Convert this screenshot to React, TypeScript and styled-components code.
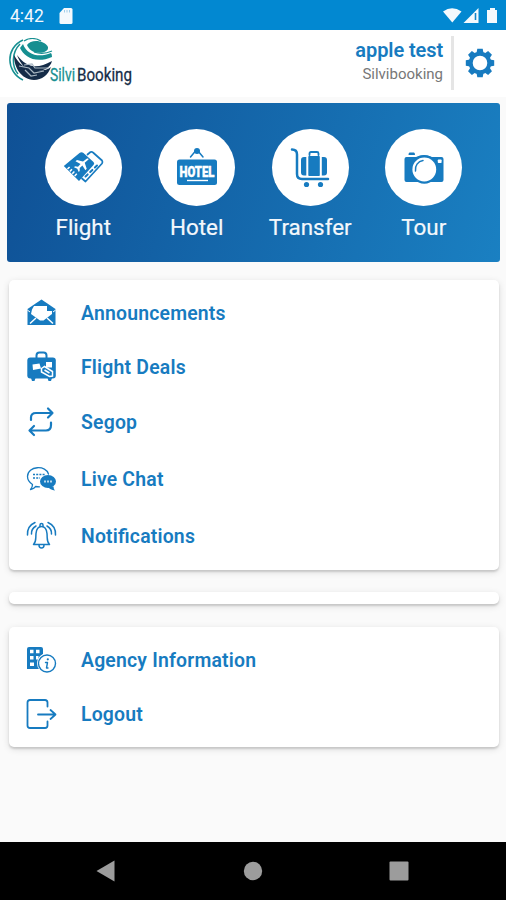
import React from 'react';
import styled, { createGlobalStyle } from 'styled-components';

const blue = '#177bc0';

const GlobalStyle = createGlobalStyle`
  * { box-sizing: border-box; }
  body { margin: 0; background: #fafafa; font-family: Roboto, "Liberation Sans", sans-serif; }
`;

const Screen = styled.div`
  display: flex;
  flex-direction: column;
  width: 506px;
  height: 900px;
  overflow: hidden;
  background: #fafafa;
`;

const StatusBar = styled.div`
  display: flex;
  align-items: center;
  height: 30px;
  padding: 2px 8px 0 10px;
  background: #0288d1;
  color: #f2f8fd;
`;

const Clock = styled.span`
  width: 49px;
  font-size: 17.5px;
  white-space: nowrap;
`;

const StatusIcons = styled.div`
  display: flex;
  align-items: center;
  margin-left: auto;
`;

const Header = styled.header`
  display: flex;
  height: 67px;
  background: #fff;
`;

const Brand = styled.div`
  display: flex;
  padding: 8px 0 0 9px;
`;

const BrandName = styled.svg`
  margin: 24px 0 0 -4px;
  overflow: visible;
`;

const User = styled.div`
  display: flex;
  flex-direction: column;
  align-items: flex-end;
  margin-left: auto;
  padding: 8px 8px 0 0;
`;

const UserName = styled.span`
  font-size: 20px;
  line-height: 24px;
  font-weight: 600;
  letter-spacing: -0.1px;
  color: ${blue};
`;

const Agency = styled.span`
  font-size: 15px;
  line-height: 24px;
  color: #777;
`;

const Divider = styled.div`
  width: 3px;
  height: 54px;
  margin-top: 6px;
  background: #e5e5e5;
`;

const Settings = styled.button`
  width: 52px;
  height: 66px;
  padding: 0;
  border: 0;
  background: none;
  line-height: 0;
`;

const Banner = styled.nav`
  display: grid;
  grid-template-columns: repeat(4, 113.5px);
  justify-content: center;
  height: 159px;
  margin: 6px 6px 0 7px;
  padding: 26px 0 0;
  border-radius: 3px;
  background: linear-gradient(107deg, #0f5095 0%, #1a80c2 100%);
`;

const Service = styled.div`
  display: flex;
  flex-direction: column;
  align-items: center;
`;

const Disc = styled.div`
  display: grid;
  place-items: center;
  width: 77px;
  height: 77px;
  border-radius: 50%;
  background: #fff;
`;

const ServiceLabel = styled.span`
  margin-top: 7px;
  font-size: 22.4px;
  line-height: 28px;
  -webkit-text-stroke: 0.2px #f4f8fc;
  color: #f4f8fc;
`;

const Card = styled.section<{ $height: number; $gap: number }>`
  height: ${(p) => p.$height}px;
  margin: ${(p) => p.$gap}px 7px 0 9px;
  padding-top: 6px;
  border-radius: 5px;
  background: #fff;
  box-shadow: 0 2px 2px rgba(0, 0, 0, 0.13), 0 2px 7px rgba(0, 0, 0, 0.13);
`;

const Row = styled.div<{ $height: number }>`
  display: grid;
  grid-template-columns: 72px 1fr;
  align-items: center;
  height: ${(p) => p.$height}px;
`;

const RowIcon = styled.svg`
  margin-left: 16px;
  overflow: visible;
`;

const RowLabel = styled.span`
  padding-top: 1px;
  font-size: 19.4px;
  font-weight: 600;
  letter-spacing: 0.2px;
  font-feature-settings: "liga" 1;
  color: ${blue};
`;

const SystemNav = styled.footer`
  display: flex;
  justify-content: space-between;
  align-items: center;
  height: 58px;
  margin-top: auto;
  padding: 0 97px 0 96px;
  background: #000;
`;

const line = { fill: 'none', stroke: blue, strokeLinecap: 'round', strokeLinejoin: 'round' } as const;

const icons = {
  mail: (
    <>
      <path d="M.5 12V11L14.500 1.500 28.500 11v16H.5z" fill={blue} />
      <path d="m5 11.500 2-3.500h13v5h5v3L16.500 22.500h-3.500L4 16z" fill="#fff" />
      <path d="M21 8.500v3.500h4" {...line} strokeWidth="1.500" />
      <path d="m3 25.500 6-5.500m17 5.500-6-5.500" fill="none" stroke="#fff" strokeWidth="1.500" />
      <path d="M.3 12 3 14M28.700 12 26 14" fill="none" stroke="#fff" strokeWidth="1" />
    </>
  ),
  suitcase: (
    <>
      <path d="M9.500 7V3.500q0-3 3-3h4q3 0 3 3V7" {...line} strokeWidth="2" />
      <rect x=".3" y="5.500" width="28.500" height="21" rx="3" fill={blue} />
      <path d="M4 26h4.500l-1 3H5zM20.500 26H25l-1 3h-2.500z" fill={blue} />
      <path d="m5.500 12.500 7-1 1.500 5-8 1.500zM19 10h6v5.500h-6z" fill="#fff" />
      <path d="m14.500 16.500 3-2 8 5v4.500l-3 .5-8-4.500z" fill={blue} stroke="#fff" strokeWidth="1.500" />
      <path d="m17.500 18 5 3" stroke="#fff" strokeWidth="1.500" />
    </>
  ),
  repeat: (
    <path d="M4 13v-2.500Q4 6 9 6h16.500M21 1.500 25.500 6 21 10.500M24 15.500V18q0 5.500-5 5.500H3M7 19 2.500 23.500 7 28" {...line} strokeWidth="2.200" />
  ),
  chat: (
    <>
      <path d="M21.500 10C19.500 1 .5 1.500.5 12.500c0 4 2 6 5 8q0 3-2 5 4-1 5-3l4 .3" {...line} strokeWidth="1.300" />
      <path d="M6 10.500h12M6 14h7" fill="none" stroke={blue} strokeWidth="1.700" strokeDasharray="2 1.200" />
      <ellipse cx="21" cy="17.500" rx="8" ry="6.500" fill={blue} />
      <path d="M20.500 22.500h6q0 2.500 1.500 4-5-.5-7.500-4z" fill={blue} />
      <path d="M17 17.500h8" stroke="#b9d8ec" strokeWidth="1.800" strokeDasharray="2 1" />
    </>
  ),
  bell: (
    <>
      <path d="M6.500 23.500c3-3 2-5 2.500-11C9.500 7.500 11.500 5.500 14.500 5.500s5 2 5.500 7c.5 6-.5 8 2.500 11zM13 5.500V4a1.500 1.500 0 0 1 3 0v1.500M12 24q0 3 2.500 3t2.500-3" {...line} strokeWidth="1.500" />
      <path d="M8 1.500Q0 5 .5 14M9 5Q4 8 4.500 13M21 1.500Q29 5 28.500 14M20 5Q25 8 24.500 13" {...line} strokeWidth="1.500" />
    </>
  ),
  agency: (
    <>
      <path d="M0 4Q0 2 2 2h12q2 0 2 2v5q-6 3-5 10l2 5H0z" fill={blue} />
      <path d="M3 4.800h3.500v3.500H3zm6 0h3.500v3.500H9zM3 11h3.500v3.500H3zm6 0h2.500v3.500H9zM3 17.500h4v3.500H3z" fill="#fff" />
      <circle cx="20" cy="18.500" r="10" fill="#fff" />
      <circle cx="20" cy="18.500" r="8.500" {...line} strokeWidth="1.400" />
      <path d="M18.500 17.500h2l-1 5.500h1.500" {...line} strokeWidth="1.400" />
      <circle cx="20.800" cy="14.300" r="1.100" fill={blue} />
    </>
  ),
  logout: (
    <path d="M20.500 7.500V3.500q0-2.500-2.500-2.500H3Q.5 1 .5 3.500v23Q.5 29 3 29h15q2.500 0 2.500-2.500v-4M11 15.500h17M23.500 11 28.500 15.500l-5 4.500" {...line} strokeWidth="1.800" />
  ),
};

type IconName = keyof typeof icons;

const primary: { icon: IconName; label: string; height: number }[] = [
  { icon: 'mail', label: 'Announcements', height: 54 },
  { icon: 'suitcase', label: 'Flight Deals', height: 54 },
  { icon: 'repeat', label: 'Segop', height: 56 },
  { icon: 'chat', label: 'Live Chat', height: 57 },
  { icon: 'bell', label: 'Notifications', height: 57 },
];

const secondary: typeof primary = [
  { icon: 'agency', label: 'Agency Information', height: 54 },
  { icon: 'logout', label: 'Logout', height: 54 },
];

const MenuRow = ({ icon, label, height }: (typeof primary)[number]) => (
  <Row $height={height}>
    <RowIcon width="34" height="30" viewBox="-2 0 34 30">{icons[icon]}</RowIcon>
    <RowLabel>{label}</RowLabel>
  </Row>
);

const services = [
  {
    label: 'Flight',
    art: (
      <>
        <path d="m24.500 6.500 3-2.500q1.500-.5 2.500.5l9 8q1 1.500 0 3L22.500 33.500 19 30.500" {...line} strokeWidth="1.700" />
        <path d="m22.500 28.500 11.500-11" {...line} strokeWidth="2" strokeDasharray="3 3.500" />
        <path d="M.8 18 16.500 5q2-1.500 4 0l10 9q1.500 1.500 0 3L16 33z" fill={blue} />
        <path d="m5 19.500 9.500 9" stroke="#fff" strokeWidth="3" strokeDasharray="1.500 1.800" />
        <path d="m24 10.500-4 3-6-1.500-1.500 1.200 5 2.800-2.500 2.700-3-.4-1 1 3.300 1.400 1.400 3.300 1-1v-3l2.700-2.500 3 4.700 1.300-1.400-2-6 3.800-3.300q.5-1.500-1.500-1z" fill="#fff" />
      </>
    ),
  },
  {
    label: 'Hotel',
    art: (
      <>
        <path d="m13.500 9 5-6h2.500l5 6" {...line} strokeWidth="1.500" />
        <circle cx="20" cy="3" r="3" fill={blue} />
        <rect x="0" y="11.500" width="40" height="25.500" rx="2.500" fill={blue} />
        <text x="20" y="29" textAnchor="middle" textLength="35" lengthAdjust="spacingAndGlyphs" fontFamily="Roboto, sans-serif" fontWeight="900" fontSize="15.5" fill="#fff" stroke="#fff" strokeWidth=".4">HOTEL</text>
        <path d="M10 32.500h21" stroke="#fff" strokeWidth="1.400" />
      </>
    ),
  },
  {
    label: 'Transfer',
    art: (
      <>
        <path d="M2 1.500q5 0 5 5V26q0 5 5 5h26" {...line} strokeWidth="2.500" />
        <path d="M19.500 7V5.500q0-1.500 1.500-1.500h6q1.500 0 1.500 1.500V7" {...line} strokeWidth="1.800" />
        <rect x="18.300" y="8" width="11.500" height="20" rx=".8" fill={blue} />
        <path d="M16.300 9v18.500H14q-3 0-3-3V12q0-3 3-3zM31.800 9v18.500H34q3 0 3-3V12q0-3-3-3z" fill={blue} />
        <circle cx="16.500" cy="36.500" r="2.600" fill={blue} />
        <circle cx="30.500" cy="36.500" r="2.600" fill={blue} />
      </>
    ),
  },
  {
    label: 'Tour',
    art: (
      <>
        <path d="M5.500 4.500h4.500q1 0 1 2.500H4.500q0-2.500 1-2.500zM2.500 9H12q8-4 16 0h9.500q2 0 2 2v21q0 2-2 2h-35q-2 0-2-2V11q0-2 2-2z" fill={blue} />
        <circle cx="20.300" cy="21.500" r="14.200" fill={blue} />
        <circle cx="20.300" cy="21.500" r="11.900" fill="#fff" />
        <path d="M11.500 23a9 9 0 0 1 7.500-10.500" {...line} strokeWidth="1.500" />
        <rect x="33.800" y="11.500" width="3.800" height="3.500" rx=".7" fill="#fff" />
      </>
    ),
  },
];

const SdCard = () => (
  <svg width="14" height="16" viewBox="0 0 14 16">
    <path d="M5 0h7q1.500 0 1.500 1.500v13q0 1.500-1.500 1.500H2Q.5 16 .5 14.500V5z" fill="#f4f9fd" />
    <path d="M5.500 2v2.500M8 2v2.500M10.500 2v2.500" stroke="#9fcdea" strokeWidth="1" />
  </svg>
);

const Globe = () => (
  <svg width="46" height="46" viewBox="0 0 46 46">
    <path d="M14 2C-4 10-3 34 14 42M11 6C2 15 3 29 9 36" fill="none" stroke="#168f91" strokeWidth="1.500" />
    <path d="M5 17c0 13 7 24 20 25 8 0 14-5 17-13-5 4-11 4-17 3-9-1-15-6-20-15z" fill="#152c48" />
    <path d="M8 17c9 12 19 15 35 6-2 8-11 11-19 10-8-1-13-8-16-16z" fill="#152c48" />
    <path d="M11 10c4 9 16 16 32 9q0-3-1-4c-12 5-24 2-28-9z" fill="#168f91" />
    <path d="M18 7c4-6 17-5 21 2 1 5-8 7-14 5q-5-2-7-7z" fill="#168f91" />
    <path d="M15 3q8-5 17 0M43 13q-9 4-18 1" fill="none" stroke="#168f91" strokeWidth="1.200" />
    <path d="m10 28 10 2 5 5 10-2M16 32l6 6 6-1M15 27l8-1 3 4 14 0" fill="none" stroke="#a9b7c2" strokeWidth="1.200" />
  </svg>
);

const teeth = [0, 45, 90, 135, 180, 225, 270, 315];

export default function App() {
  return (
    <Screen>
      <GlobalStyle />
      <StatusBar>
        <Clock>4:42</Clock>
        <SdCard />
        <StatusIcons>
          <svg width="55" height="18" viewBox="0 0 55 18" fill="#f4f9fd">
            <path d="M0 4.500q9-6.500 18.500 0L9.300 15.500z" />
            <path d="M20.500 16 35.500 1v15z" />
            <path d="M32.500 6v7" stroke="#1185ca" strokeWidth="1.600" />
            <path d="M44 3h3V1h5v2h2v13H44z" />
          </svg>
        </StatusIcons>
      </StatusBar>
      <Header>
        <Brand>
          <Globe />
          <BrandName width="82" height="26" viewBox="0 0 82 26" fontFamily="Roboto, sans-serif" fontSize="19">
            <text x="-1" y="19" fill="#168f91" stroke="#168f91" strokeWidth=".3" textLength="25" lengthAdjust="spacingAndGlyphs">Silvi</text>
            <text x="26" y="19" fill="#152c48" stroke="#152c48" strokeWidth=".3" textLength="55" lengthAdjust="spacingAndGlyphs">Booking</text>
          </BrandName>
        </Brand>
        <User>
          <UserName>apple test</UserName>
          <Agency>Silvibooking</Agency>
        </User>
        <Divider />
        <Settings aria-label="Settings">
          <svg width="30" height="30" viewBox="-15 -15 30 30">
            {teeth.map((a) => (
              <path key={a} d="M-3.500-10-2.700-14.200h5.400L3.500-10z" fill={blue} transform={`rotate(${a})`} />
            ))}
            <circle r="9.300" fill="none" stroke={blue} strokeWidth="4" />
          </svg>
        </Settings>
      </Header>
      <Banner>
        {services.map((s) => (
          <Service key={s.label}>
            <Disc>
              <svg width="40" height="40" viewBox="0 0 40 40" overflow="visible">{s.art}</svg>
            </Disc>
            <ServiceLabel>{s.label}</ServiceLabel>
          </Service>
        ))}
      </Banner>
      <Card $height={290} $gap={18}>
        {primary.map((item) => <MenuRow key={item.label} {...item} />)}
      </Card>
      <Card $height={12} $gap={22} />
      <Card $height={120} $gap={23}>
        {secondary.map((item) => <MenuRow key={item.label} {...item} />)}
      </Card>
      <SystemNav>
        <svg width="20" height="22" viewBox="0 0 20 22"><path d="M.5 11 18.500.500v21z" fill="#9c9c9c" /></svg>
        <svg width="20" height="20" viewBox="0 0 20 20"><circle cx="10" cy="10" r="9.200" fill="#9c9c9c" /></svg>
        <svg width="20" height="20" viewBox="0 0 20 20"><rect x=".5" y=".5" width="19" height="19" rx="1" fill="#9c9c9c" /></svg>
      </SystemNav>
    </Screen>
  );
}
